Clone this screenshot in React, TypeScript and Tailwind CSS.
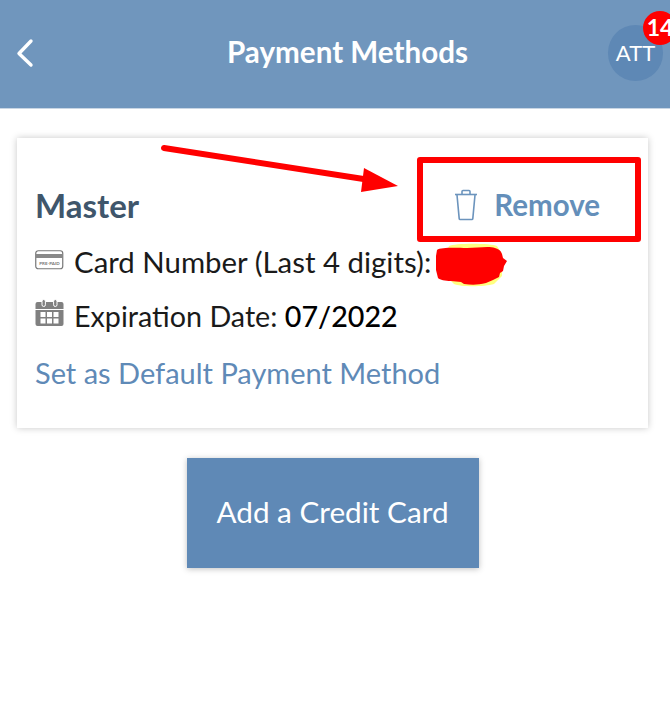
import React from "react"

function CardIcon() {
  return (
    <svg width="29" height="20" viewBox="0 0 29 20" fill="none" className="mb-[4px]">
      <rect x="0.75" y="0.75" width="27" height="18" rx="2.5" stroke="#777" strokeWidth="1.2" />
      <rect x="1" y="4" width="27" height="4" fill="#888" />
      <text x="14.5" y="15" textAnchor="middle" fontSize="4.5" fontWeight="700" fill="#777" fontFamily="Lato, sans-serif">PRE-PAID</text>
    </svg>
  )
}

function CalendarIcon() {
  return (
    <svg width="29" height="28" viewBox="0 0 29 28" className="mb-[8px]">
      <path d="M2.5 3h24a2 2 0 0 1 2 2v5H.5V5a2 2 0 0 1 2-2Z" fill="#808080" />
      <path d="M.5 11h28v14a2 2 0 0 1-2 2h-24a2 2 0 0 1-2-2Z" fill="#808080" />
      <rect x="7" y="0.5" width="3.4" height="7" rx="1.7" fill="#808080" stroke="#fff" strokeWidth="1" />
      <rect x="18.6" y="0.5" width="3.4" height="7" rx="1.7" fill="#808080" stroke="#fff" strokeWidth="1" />
      <g fill="#fff">
        <rect x="5.5" y="13" width="5" height="5" />
        <rect x="12" y="13" width="5" height="5" />
        <rect x="18.5" y="13" width="5" height="5" />
        <rect x="5.5" y="19.5" width="5" height="5" />
        <rect x="12" y="19.5" width="5" height="5" />
        <rect x="18.5" y="19.5" width="5" height="5" />
      </g>
    </svg>
  )
}

function TrashIcon() {
  return (
    <svg width="24" height="32" viewBox="0 0 24 32" fill="none" stroke="#6c94bd" strokeWidth="1.6">
      <path d="M1 5.5h22" />
      <path d="M8 5V2.5a1 1 0 0 1 1-1h6a1 1 0 0 1 1 1V5" />
      <path d="M3 6l2.2 23.6a1 1 0 0 0 1 .9h11.6a1 1 0 0 0 1-.9L21 6" />
    </svg>
  )
}

export default function App() {
  return (
    <div className="relative min-h-[712px] w-[670px] overflow-hidden bg-white font-['Lato',sans-serif]">
      <header className="flex h-[109px] items-center justify-between border-b border-[#c9d6e4] bg-[#7096bd] pb-[3px] pl-[15px]">
        <svg width="20" height="30" viewBox="0 0 20 30" fill="none" stroke="#fff" strokeWidth="3.4" strokeLinecap="round" strokeLinejoin="round">
          <path d="M16 3 4 15.5 16 27" />
        </svg>
        <h1 className="ml-[52px] text-[29.6px] font-bold text-white">Payment Methods</h1>
        <div className="relative mr-[7px] flex h-[56px] w-[55px] items-center justify-center rounded-full bg-[#5e88b5] text-[22px] text-white">
          ATT
          <span className="absolute left-[35px] top-[-14px] flex h-[34px] w-[34px] items-center justify-center rounded-full bg-[#ff0000] text-[23px] font-bold">14</span>
        </div>
      </header>

      <main className="flex flex-col items-center pl-[17px] pr-[22px] pt-[29px]">
        <section className="h-[290px] w-full bg-white pl-[18px] pt-[45px] shadow-[0_0_7px_rgba(0,0,0,0.22)]">
          <div className="flex h-[44px] items-center justify-between pr-[48px]">
            <h2 className="text-[33px] font-bold leading-[38px] text-[#3f566b]">Master</h2>
            <button className="flex items-center gap-[16px] text-[29.5px] font-bold text-[#648fba]">
              <TrashIcon />
              Remove
            </button>
          </div>
          <p className="mt-[17px] flex h-[36px] items-center gap-[10px] text-[29.4px] text-[#1a1a1a]">
            <CardIcon />
            <span>Card Number (Last 4 digits):</span>
          </p>
          <p className="mt-[19px] flex h-[36px] items-center gap-[10px] text-[28.7px] text-[#1a1a1a]">
            <CalendarIcon />
            <span>Expiration Date: <span className="font-medium text-black">07/2022</span></span>
          </p>
          <a className="mt-[20px] block text-[29px] leading-[36px] text-[#5f8ab7]">Set as Default Payment Method</a>
        </section>

        <button className="mt-[30px] h-[110px] w-[292px] bg-[#5f89b6] pb-[2px] text-[29.7px] text-white shadow-[0_1px_6px_rgba(0,0,0,0.25)]">
          Add a Credit Card
        </button>
      </main>

      {/* annotation drawn on top of the screenshot */}
      <div className="absolute left-[417px] top-[157px] h-[85px] w-[224px] rounded-[3px] border-[6px] border-[#ff0000]" />
      <svg className="absolute left-0 top-0" width="670" height="712" fill="none">
        <path d="M164 148 370 180" stroke="#ff0000" strokeWidth="6" strokeLinecap="round" />
        <path d="M364 168 398 186 361 192Z" fill="#ff0000" />
        <path d="M449 246c5-3 42-3 48 0l5 8v22l-8 8c-10 3-34 3-40 0l-8-8v-22Z" fill="#ffff80" />
        <path d="M437 250c4-3 20-2 30-2s22-2 28 0 6 4 7 6l1 4 4 3-3 5-1 5-3 2-1 4-6 3-7 3c-8 2-14 2-22 1l-3-2-10-1c-6 0-11-1-13-3l-2-8v-14Z" fill="#ff0000" />
      </svg>
    </div>
  )
}
